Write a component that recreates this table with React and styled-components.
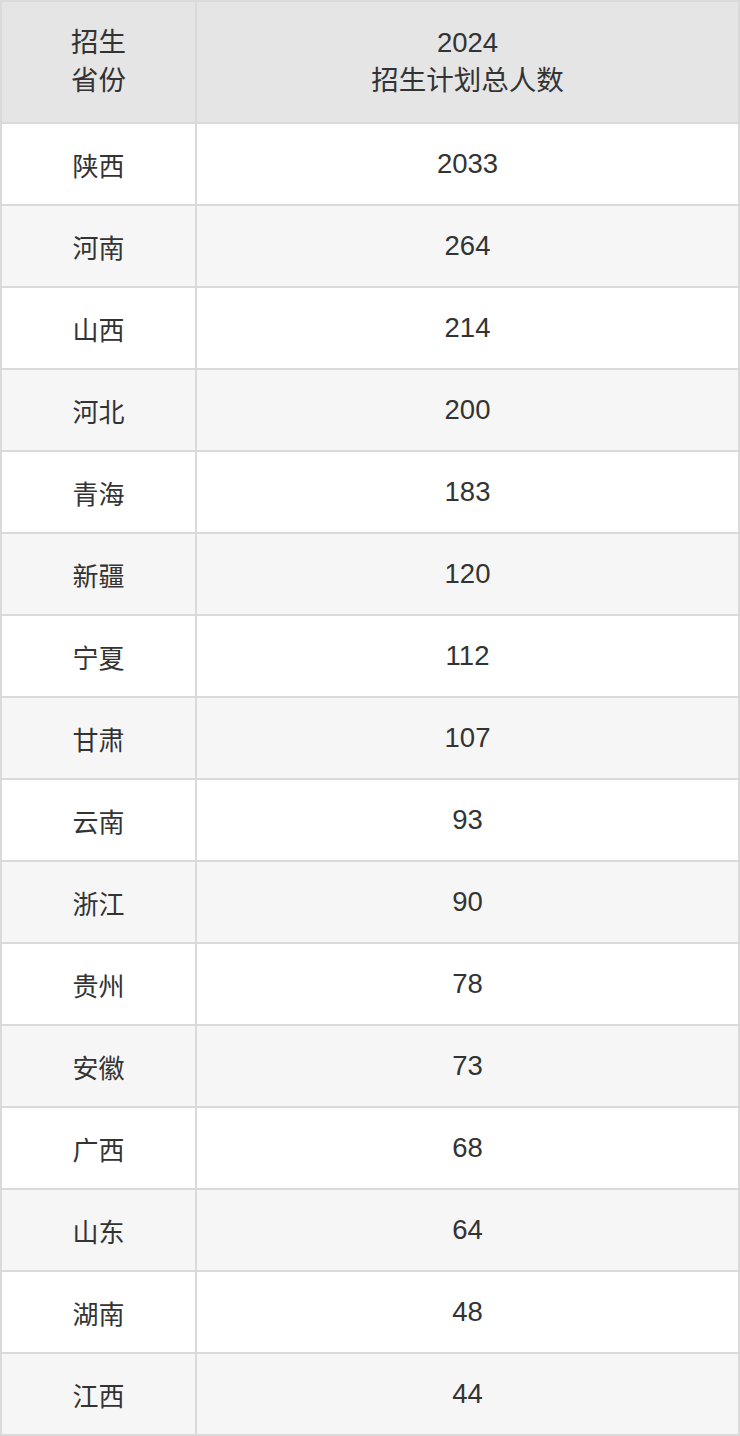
import React from 'react';
import styled, { createGlobalStyle } from 'styled-components';

const GlobalStyle = createGlobalStyle`
  body {
    margin: 0;
    background: #ffffff;
    font-family: "Liberation Sans", "Noto Sans CJK SC", sans-serif;
  }
`;

const Table = styled.table`
  width: 740px;
  border-collapse: collapse;
  table-layout: fixed;
  color: #333333;
`;

const HeadCell = styled.th`
  background: #e5e5e5;
  border: 2px solid #dadada;
  height: 120px;
  font-size: 27.5px;
  font-weight: 400;
  line-height: 38px;
  text-align: center;
  padding: 0;
`;

const Row = styled.tr`
  background: ${(p) => (p.$alt ? '#f6f6f6' : '#ffffff')};
`;

const Cell = styled.td`
  border: 2px solid #dadada;
  height: 80px;
  font-size: ${(p) => (p.$num ? '27.5px' : '26px')};
  text-align: center;
  padding: 0;
`;

const rows = [
  ['陕西', 2033],
  ['河南', 264],
  ['山西', 214],
  ['河北', 200],
  ['青海', 183],
  ['新疆', 120],
  ['宁夏', 112],
  ['甘肃', 107],
  ['云南', 93],
  ['浙江', 90],
  ['贵州', 78],
  ['安徽', 73],
  ['广西', 68],
  ['山东', 64],
  ['湖南', 48],
  ['江西', 44],
];

const App = () => (
  <>
    <GlobalStyle />
    <Table>
      <colgroup>
        <col style={{ width: '195px' }} />
        <col />
      </colgroup>
      <thead>
        <tr>
          <HeadCell>招生<br />省份</HeadCell>
          <HeadCell>2024<br />招生计划总人数</HeadCell>
        </tr>
      </thead>
      <tbody>
        {rows.map(([name, num], i) => (
          <Row key={name} $alt={i % 2 === 1}>
            <Cell>{name}</Cell>
            <Cell $num>{num}</Cell>
          </Row>
        ))}
      </tbody>
    </Table>
  </>
);

export default App;
